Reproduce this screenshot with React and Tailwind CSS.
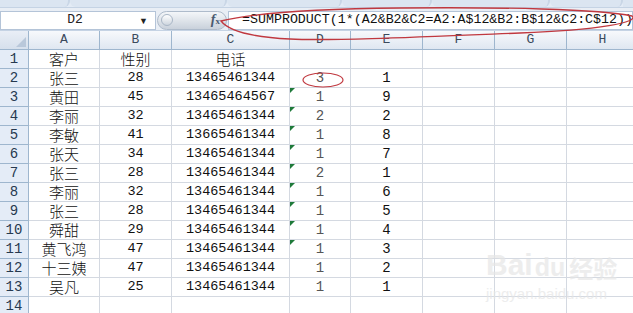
import React from 'react';

const cols = ['A', 'B', 'C', 'D', 'E', 'F', 'G', 'H'];

const rows = [
  ['客户', '性别', '电话', '', ''],
  ['张三', '28', '13465461344', '3', '1'],
  ['黄田', '45', '13465464567', '1', '9'],
  ['李丽', '32', '13465461344', '2', '2'],
  ['李敏', '41', '13665461344', '1', '8'],
  ['张天', '34', '13465461344', '1', '7'],
  ['张三', '28', '13465461344', '2', '1'],
  ['李丽', '32', '13465461344', '1', '6'],
  ['张三', '28', '13465461344', '1', '5'],
  ['舜甜', '29', '13465461344', '1', '4'],
  ['黄飞鸿', '47', '13465461344', '1', '3'],
  ['十三姨', '47', '13465461344', '1', '2'],
  ['吴凡', '25', '13465461344', '1', '1'],
  ['', '', '', '', ''],
];

const cjk = { fontFamily: '"Noto Sans CJK SC", "Liberation Sans", sans-serif' };
const mono = { fontFamily: '"Liberation Mono", "DejaVu Sans Mono", monospace' };
const sans = { fontFamily: '"Liberation Sans", sans-serif' };

function GreenFlag() {
  return (
    <span className="absolute left-0 top-0 w-0 h-0 border-t-[5px] border-t-[#1f7a3a] border-r-[5px] border-r-transparent" />
  );
}

export default function App() {
  return (
    <div className="w-[633px] h-[313px] overflow-hidden bg-white relative select-none">
      {/* ribbon bottom edge */}
      <div className="h-[8px] flex bg-[#e3ebf5] border-b border-[#c5d3e4]">
        <div className="w-[70px] border-r-2 border-[#c9d6e6] rounded-br-md bg-[#dbe5f1]" />
        <div className="w-[157px] border-r-2 border-[#c9d6e6] rounded-b-md bg-[#dbe5f1]" />
        <div className="w-[115px] border-r-2 border-[#c9d6e6] rounded-b-md bg-[#dbe5f1]" />
        <div className="w-[90px] border-r-2 border-[#c9d6e6] rounded-b-md bg-[#dbe5f1]" />
        <div className="w-[118px] border-r-2 border-[#c9d6e6] rounded-b-md bg-[#dbe5f1]" />
        <div className="w-[73px] border-r-2 border-[#c9d6e6] rounded-b-md bg-[#dbe5f1]" />
        <div className="flex-1 bg-[#dbe5f1]" />
      </div>

      {/* formula bar */}
      <div className="h-[23px] flex items-center bg-[#e9eef5] pt-[2px] border-b border-[#c5d3e4]">
        <div className="w-[156px] h-[19px] bg-white border border-[#b4c4d8] flex items-center relative">
          <span className="flex-1 text-center text-[13px] text-[#222] pl-[10px]" style={mono}>D2</span>
          <span className="w-[16px] text-[9px] text-[#222] leading-none">▼</span>
        </div>
        <div className="w-[70px] h-[19px] mx-[1px] rounded-full bg-gradient-to-b from-[#f4f6f9] via-[#dfe4ea] to-[#c9d1db] border border-[#aebbcb] flex items-center px-[3px]">
          <span className="w-[12px] h-[12px] rounded-full bg-gradient-to-b from-[#ffffff] to-[#cdd5de] border border-[#a9b6c6]" />
          <span className="flex-1" />
          <span className="text-[14px] italic text-[#4a5a70] font-bold leading-none pr-[3px]" style={{ fontFamily: '"Liberation Serif", serif' }}>f<span className="text-[9px] not-italic">x</span></span>
        </div>
        <div className="flex-1 h-[19px] bg-white border border-[#b4c4d8] flex items-center pl-[13px] overflow-hidden whitespace-nowrap">
          <span className="text-[13.3px] text-[#111] leading-none" style={mono}>=SUMPRODUCT(1*(A2&amp;B2&amp;C2=A2:A$12&amp;B2:B$12&amp;C2:C$12))</span>
        </div>
      </div>

      {/* sheet */}
      <div className="grid grid-cols-[29px_71px_72px_118px_61px_72px_72px_72px_72px] auto-rows-[19px]">
        <div className="bg-gradient-to-b from-[#e9eef6] to-[#d6e0ec] border-r border-b border-[#9eb6ce] relative">
          <span className="absolute right-[2px] bottom-[2px] w-0 h-0 border-b-[10px] border-b-[#b9c8da] border-l-[10px] border-l-transparent" />
        </div>
        {cols.map((c) => (
          <div key={c} className="bg-gradient-to-b from-[#f7f9fc] to-[#dfe7f1] border-r border-b border-[#9eb6ce] flex items-center justify-center text-[13px] text-[#3b4a5c]" style={mono}>
            {c}
          </div>
        ))}
        {rows.map((r, i) => {
          const n = i + 1;
          const flagged = n >= 3 && n <= 11;
          return (
            <React.Fragment key={n}>
              <div className="bg-[#e4ecf7] border-r border-b border-[#9eb6ce] flex items-center justify-center text-[14px] text-[#26394f]" style={mono}>
                {n}
              </div>
              <div className="border-r border-b border-[#d4d9e1] flex items-center justify-center text-[15px] font-light text-[#111]" style={cjk}>{r[0]}</div>
              <div className="border-r border-b border-[#d4d9e1] flex items-center justify-center text-[13.5px] text-[#111]" style={n === 1 ? cjk : mono}>
                <span className={n === 1 ? 'text-[15px] font-light' : ''}>{r[1]}</span>
              </div>
              <div className="border-r border-b border-[#d4d9e1] flex items-center justify-center text-[13.5px] text-[#111]" style={n === 1 ? cjk : mono}>
                <span className={n === 1 ? 'text-[15px] font-light' : ''}>{r[2]}</span>
              </div>
              <div className="border-r border-b border-[#d4d9e1] flex items-center justify-center text-[14px] text-[#555] relative" style={mono}>
                {flagged && <GreenFlag />}
                {r[3]}
              </div>
              <div className="border-r border-b border-[#d4d9e1] flex items-center justify-center text-[14px] text-[#111]" style={mono}>{r[4]}</div>
              <div className="border-r border-b border-[#d4d9e1]" />
              <div className="border-r border-b border-[#d4d9e1]" />
              <div className="border-r border-b border-[#d4d9e1]" />
            </React.Fragment>
          );
        })}
      </div>

      {/* red annotation marks */}
      <svg className="absolute left-0 top-0 pointer-events-none" width="633" height="313" viewBox="0 0 633 313">
        <path d="M221 21 C 250 14, 300 9, 400 8 C 500 7, 600 9, 632 16 C 640 22, 600 30, 520 33 C 420 37, 330 41, 290 39 C 250 37, 228 30, 221 21 Z" fill="none" stroke="#c0383f" strokeWidth="1.3" />
        <ellipse cx="323" cy="80" rx="20" ry="7" fill="none" stroke="#c0383f" strokeWidth="1.2" />
      </svg>

      {/* watermark */}
      <div className="absolute left-[486px] top-[250px] flex flex-col items-start pointer-events-none opacity-70">
        <div className="flex items-end leading-none">
          <span className="text-[30px] font-bold text-[#e6e6e6]" style={sans}>Bai</span>
          <span className="text-[25px] font-bold text-[#e6e6e6] ml-[2px]" style={sans}>du</span>
          <span className="text-[24px] font-bold text-[#e6e6e6] ml-[4px]" style={cjk}>经验</span>
        </div>
        <span className="text-[15px] text-[#e6e6e6] mt-[3px]" style={sans}>jingyan.baidu.com</span>
      </div>
    </div>
  );
}
